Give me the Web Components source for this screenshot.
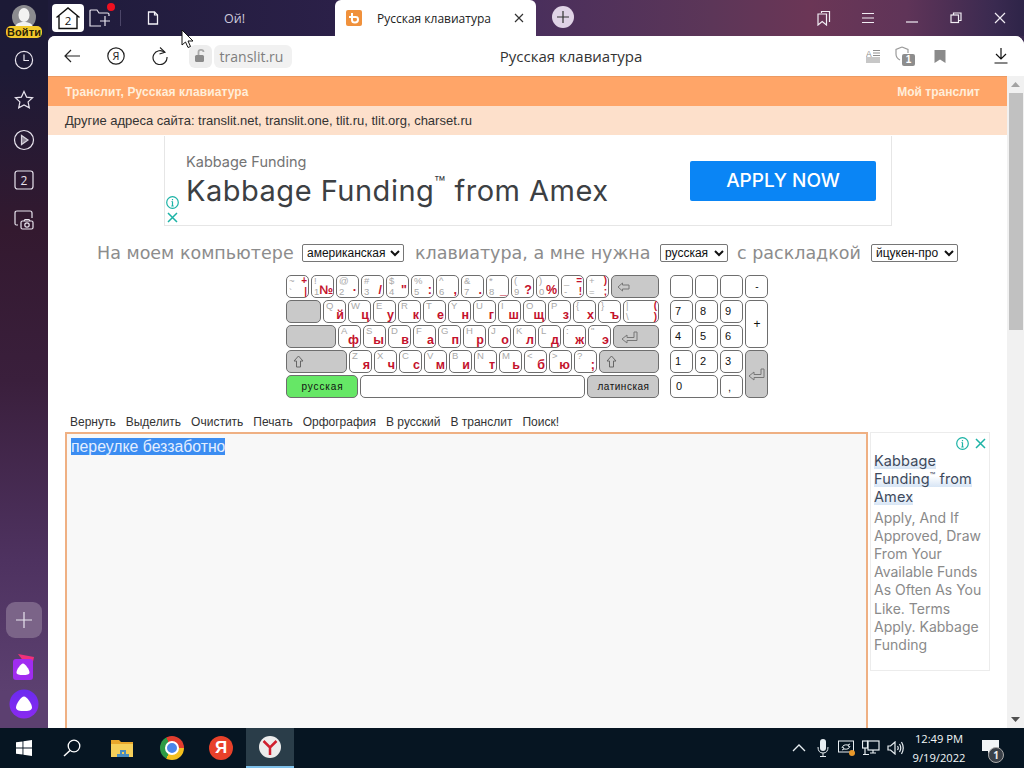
<!DOCTYPE html>
<html lang="ru">
<head>
<meta charset="utf-8">
<title>Русская клавиатура</title>
<style>
html,body{margin:0;padding:0;width:1024px;height:768px;overflow:hidden;background:#1b1a35}
</style>
</head>
<body>
<browser-app></browser-app>
<script>
function def(name, css, html){
  customElements.define(name, class extends HTMLElement{
    connectedCallback(){
      if(this.shadowRoot) return;
      const r=this.attachShadow({mode:'open'});
      const body = typeof html==='function'? html(this): html;
      r.innerHTML='<style>'+css+'</style>'+body;
    }
  });
}
const UI='"Open Sans","Noto Sans",sans-serif';
const AR='"Liberation Sans",Arial,sans-serif';
const AD='Inter,"Open Sans",sans-serif';
const S=(w,h,inner,extra='')=>`<svg width="${w}" height="${h}" viewBox="0 0 ${w} ${h}" fill="none" stroke="currentColor" stroke-width="1.2" ${extra}>${inner}</svg>`;

/* ---------- generic icon button ---------- */
def('icon-box',`:host{display:flex;align-items:center;justify-content:center;width:var(--w,44px);height:var(--h,40px);color:var(--c,#222);flex:none}`,`<slot></slot>`);

/* ---------- left rail ---------- */
def('left-rail',`
:host{display:flex;flex-direction:column;align-items:center;width:48px;flex:none;color:#e8e4ee;
 background:linear-gradient(180deg,#1c1a36 0,#1d1a36 70px,#33192f 230px,#3a1f3c 380px,#4e3260 560px,#5c4070 692px)}
.av{position:relative;height:40px;width:48px;flex:none}
.face{position:absolute;left:12px;top:5px;width:24px;height:24px;border-radius:50%;background:#8c8c90;overflow:hidden}
.pill{position:absolute;left:6px;top:26px;width:36px;height:12px;border-radius:5px;background:#f3c92c;color:#2a2208;font:bold 11px/12px ${AR};text-align:center;letter-spacing:.1px}
.top{display:flex;flex-direction:column}
.top icon-box{--w:48px;--h:40px;--c:#e8e4ee}
.grow{flex:1}
.plus{width:36px;height:36px;border-radius:9px;background:#7b6488;display:flex;align-items:center;justify-content:center;margin-bottom:10px;flex:none}
.al{height:38px;display:flex;align-items:center;justify-content:center;flex:none}
`,`
<div class="av"><div class="face"><svg width="24" height="24" viewBox="0 0 24 24"><ellipse cx="12" cy="10" rx="5.500" ry="7" fill="#f2f2f2"/><path d="M2 24c1-6 6-7 10-7s9 1 10 7z" fill="#f2f2f2"/></svg></div><div class="pill">Войти</div></div>
<div class="top">
<icon-box>${S(20,20,'<circle cx="10" cy="10" r="8.600"/><path d="M10 4.500V10.500H15"/>')}</icon-box>
<icon-box>${S(20,20,'<path d="M10 1.500l2.600 5.600 6 .7-4.500 4.100 1.200 6L10 15l-5.300 2.900 1.200-6L1.400 7.800l6-.7z"/>')}</icon-box>
<icon-box>${S(22,22,'<circle cx="11" cy="11" r="9.500"/><path d="M8.500 6.500v9l6.500-4.500z" fill="#8c8494" stroke="#d8d4de"/>')}</icon-box>
<icon-box>${S(20,20,'<rect x="1" y="1" width="18" height="18" rx="2.500"/><text x="10" y="14.500" text-anchor="middle" font-family="Open Sans" font-size="12" fill="currentColor" stroke="none">2</text>')}</icon-box>
<icon-box>${S(20,20,'<path d="M4 15H2.500Q1 15 1 13.500V3Q1 1 3 1H16Q18 1 18 3V8"/><rect x="7" y="11" width="12" height="8" rx="1.500"/><circle cx="13" cy="15" r="2.200"/><path d="M10 11l1-1.500h4l1 1.500"/>')}</icon-box>
</div>
<div class="grow"></div>
<div class="plus">${S(16,16,'<path d="M8 0V16M0 8H16"/>')}</div>
<div class="al" style="margin-left:-3px"><svg width="26" height="30" viewBox="0 0 26 30"><path d="M8 2l16 3-3 14z" fill="#f0317a"/><rect x="3" y="7" width="20" height="21" rx="3" fill="#a02cf0"/><path d="M13 11.500c2 0 6.500 6 6.500 9 0 2-3 2.500-6.500 2.500s-6.500-.5-6.500-2.500C6.500 17.500 11 11.500 13 11.500z" fill="#fff"/></svg></div>
<div class="al" style="height:36px;margin-bottom:6px"><svg width="30" height="30" viewBox="0 0 30 30"><defs><linearGradient id="ag" x1="0" y1="0" x2="0" y2="1"><stop offset="0" stop-color="#6a2bf0"/><stop offset="1" stop-color="#8a2af0"/></linearGradient></defs><circle cx="15" cy="15" r="14.500" fill="url(#ag)"/><path d="M15 7.500c3 0 8 7.500 8 11 0 3-4 3.500-8 3.500s-8-.5-8-3.500c0-3.500 5-11 8-11z" fill="#fff"/></svg></div>
`);

/* ---------- tab strip ---------- */
def('tab-strip',`
:host{display:flex;height:36px;flex:none;color:#fff;
 background:linear-gradient(90deg,#241c40 0,#2b2048 25%,#4a2f5c 50%,#5c3658 68%,#6b3656 78%,#5f3458 88%,#3a2a50 97%,#2e2448 100%)}
.left{display:flex;align-items:center;width:287px;flex:none;background:linear-gradient(90deg,#1e1b3a,#2b2048);border-bottom-right-radius:6px;position:relative}
.home{width:32px;height:28px;margin-left:4px;background:#fff;border-radius:4px;display:flex;align-items:center;justify-content:center;color:#111;flex:none}
.folder{width:26px;display:flex;justify-content:center;margin-left:3px;position:relative;color:#e8e4ee}
.dot{position:absolute;right:-2px;top:-5px;width:8px;height:8px;border-radius:50%;background:#f01020}
.sep{width:1px;height:16px;background:#4c4668;margin-left:7px}
.doc{margin-left:26px;color:#f4f2f8;display:flex}
.oy{margin-left:65px;font:12.500px ${UI};color:#cfcadb}
.active{width:201px;height:36px;flex:none;background:#fff;border-radius:6px 6px 0 0;display:flex;align-items:center;color:#222;position:relative}
.fav{margin-left:11px;width:16px;height:16px;border-radius:2px;background:#f0913c;display:flex;align-items:center;justify-content:center}
.name{margin-left:15px;font:12px ${UI};color:#222;white-space:nowrap;width:118px}
.x{margin-left:19px;display:flex;color:#333}
.new{margin-left:16px;margin-top:6px;width:22px;height:22px;border-radius:50%;background:#e0d3e6;display:flex;align-items:center;justify-content:center;color:#333;flex:none}
.grow{flex:1}
.r{display:flex;align-items:center;color:#f1edf4;margin-right:2px}
.r icon-box{--c:#f1edf4;--h:36px;--w:44px}
`,`
<div class="left">
 <div class="home">${S(26,24,'<path d="M1.500 11.500L13 2l11.500 9.500M4 10v12.500H22V10" stroke-width="1.400"/><text x="13" y="19" text-anchor="middle" font-family="Open Sans" font-size="11.500" fill="#111" stroke="none">2</text>')}</div>
 <div class="folder">${S(22,20,'<path d="M20 8V6.500Q20 5 18.500 5H10L8 2H2Q1 2 1 3V18H12"/><path d="M16 8V18M11 13H21"/>')}<span class="dot"></span></div>
 <div class="sep"></div>
 <div class="doc">${S(12,14,'<path d="M1.500 1H7.500L10.500 4V13H1.500z" stroke-width="1.300"/><path d="M7.500 1V4H10.500"/>')}</div>
 <div class="oy">Ой!</div>
</div>
<div class="active">
 <div class="fav"><svg width="12" height="12" viewBox="0 0 12 12" fill="none" stroke="#fff" stroke-width="2"><path d="M4 1V8Q4 10.500 7 10.500T10 7.500 7 5H1"/></svg></div>
 <div class="name"><slot></slot></div>
 <div class="x">${S(10,10,'<path d="M1 1L9 9M9 1L1 9"/>')}</div>
</div>
<div class="new">${S(12,12,'<path d="M6 0V12M0 6H12"/>')}</div>
<div class="grow"></div>
<div class="r">
 <icon-box>${S(14,16,'<path d="M4.500 3V1.500H12.500V12"/><path d="M1 4H9.500V15L5.200 11.500 1 15z"/>')}</icon-box>
 <icon-box>${S(14,12,'<path d="M1 1.500H13M1 6H13M1 10.500H13"/>')}</icon-box>
 <icon-box><span style="margin-top:8px;display:flex">${S(12,2,'<path d="M0 1H12"/>')}</span></icon-box>
 <icon-box>${S(12,12,'<path d="M3.500 3V1H11V8.500H8.500"/><rect x="1" y="3" width="7.500" height="7.500"/>')}</icon-box>
 <icon-box>${S(12,12,'<path d="M1 1L11 11M11 1L1 11"/>')}</icon-box>
</div>
`);

/* ---------- tool bar ---------- */
def('tool-bar',`
:host{display:flex;align-items:center;height:40px;flex:none;background:#fff;position:relative;color:#222}
.nav{display:flex;margin-left:2px}
.lock{width:23px;height:23px;border-radius:6px;background:#ededed;margin-left:7px;display:flex;align-items:center;justify-content:center;color:#888}
.addr{height:23px;margin-left:2px;width:78px;box-sizing:border-box;padding-right:3px;border-radius:6px;background:#f1f1f1;font:14px/23px ${UI};color:#7e7e7e;text-align:center;white-space:nowrap}
.title{flex:none;width:200px;margin-left:179px;text-align:center;font:15px ${UI};color:#333;white-space:nowrap}
.grow{flex:1}
.r{display:flex;align-items:center;margin-right:0;color:#9a9a9a}
.badge{position:absolute;left:7px;top:8px;width:13px;height:12px;background:#8d8d8d;border-radius:2px;color:#fff;font:bold 10px/12px ${AR};text-align:center}
.sh{position:relative;width:22px;height:20px}
`,`
<div class="nav">
 <icon-box>${S(16,14,'<path d="M7 1L1 7L7 13M1 7H16"/>')}</icon-box>
 <icon-box>${S(18,18,'<circle cx="9" cy="9" r="8.200"/><text x="9" y="13" text-anchor="middle" font-family="Open Sans" font-size="11" fill="#222" stroke="none">Я</text>')}</icon-box>
 <icon-box>${S(16,18,'<path d="M12.800 5.500A7 7 0 1 0 15 10"/><path d="M8 .5l5 4.700-5.500 1.800" stroke-width="1.100"/>')}</icon-box>
</div>
<div class="lock">${S(16,16,'<path d="M5.500 7V4Q5.500 1.800 8 1.800T10.500 4" stroke-width="1.800" stroke="#a8a8a8"/><rect x="2" y="7" width="9" height="7" rx="1.500" fill="#8a8a8a" stroke="none"/>')}</div>
<div class="addr">translit.ru</div>
<div class="title"><slot></slot></div>
<div class="grow"></div>
<div class="r">
 <icon-box style="--w:22px;--c:#8f8f8f">${S(14,14,'<text x="0" y="7.500" font-family="Liberation Sans" font-size="8.500" fill="#8f8f8f" stroke="none">A</text><path d="M7 1.500H14M7 4H14M7 6.500H14M0 9H14M0 11H14M0 13H14" stroke-width="1"/>')}</icon-box>
 <span style="width:11px"></span>
 <div class="sh">${S(14,16,'<path d="M7 1L1 3.500V8Q1 12 5 14M7 1l6 2.500V7" stroke="#9a9a9a"/>')}<span class="badge">1</span></div>
 <span style="width:16px"></span>
 <icon-box style="--w:14px">${S(12,13,'<path d="M.5 0H11.500V13L6 9.500.5 13z" fill="#8a8a8a" stroke="none"/>')}</icon-box>
 <span style="width:47px"></span>
 <icon-box style="--c:#111;--w:14px">${S(14,16,'<path d="M7 0V11M2 6L7 11 12 6M.5 15H13.500"/>')}</icon-box>
 <span style="width:16px"></span>
</div>
`);

/* ---------- page top bars ---------- */
def('site-head',`
:host{display:block;font:12px ${AR}}
.o{height:29px;background:#ffa568;border-top:1px solid #ec9a62;display:flex;justify-content:space-between;align-items:center;padding:0 27px 0 17px;color:#ffeeda;font-weight:bold}
.o span:first-child{letter-spacing:.1px}
.p{height:29px;background:#fde0cb;font-size:13px;line-height:29px;padding-left:17px;color:#333}
`,`<div class="o"><span>Транслит, Русская клавиатура</span><span>Мой транслит</span></div><div class="p">Другие адреса сайта: translit.net, translit.one, tlit.ru, tlit.org, charset.ru</div>`);

def('ad-marks',`
:host{display:flex;flex-direction:var(--dir,column);gap:var(--g,3px);align-items:center;color:#1cb3a6}
`,`${S(13,13,'<circle cx="6.500" cy="6.500" r="5.800"/><path d="M6.500 5.500V10M6.500 3V4.200M5.500 5.500H6.500M5.300 10H7.700"/>')}${S(11,11,'<path d="M1 1L10 10M10 1L1 10" stroke-width="1.500"/>')}`);

def('ad-banner',`
:host{display:flex;width:726px;height:89px;margin-left:116px;margin-top:1px;border:1px solid #e6e6e6;border-top:0;background:#fff;box-sizing:content-box;align-items:stretch}
.m{width:15px;flex:none;display:flex;align-items:flex-end;padding-bottom:2px;margin-left:1px}
.t{margin-left:5px;width:504px;flex:none;font-family:${AD};display:flex;flex-direction:column}
.a{font-size:14.500px;color:#747474;margin-top:17px;line-height:18px;white-space:nowrap}
.b{font-size:29px;color:#3c4043;line-height:34px;margin-top:3px;white-space:nowrap;font-weight:400;letter-spacing:.5px}
sup{font-size:.62em;line-height:0;vertical-align:.6em}
.btn{width:186px;height:40px;margin-top:25px;background:#0a85f5;border-radius:2px;color:#fff;font:500 19px/40px ${AD};text-align:center;flex:none}
`,`<div class="m"><ad-marks></ad-marks></div><div class="t"><div class="a">Kabbage Funding</div><div class="b">Kabbage Funding<sup>™</sup> from Amex</div></div><div class="btn">APPLY NOW</div>`);

def('layout-row',`
:host{display:flex;align-items:center;height:18px;margin:18px 0 0 49px;font:17.500px "DejaVu Sans",Verdana,sans-serif;color:#8c8c8c;white-space:nowrap}
select{font:12px ${AR};height:18px;box-sizing:border-box;padding:0;background:#fff;color:#111;border:1px solid #767676;border-radius:2px;flex:none}
.a{width:197px}.b{width:237px}.c{width:124px}
`,`<span class="a">На моем компьютере</span><select style="margin-left:8px;width:102px"><option>американская</option></select><span class="b" style="margin-left:11px">клавиатура, а мне нужна</span><select style="margin-left:8px;width:68px"><option>русская</option></select><span class="c" style="margin-left:9px">с раскладкой</span><select style="margin-left:10px;width:87px"><option>йцукен-про</option></select>`);

/* ---------- keyboard ---------- */
const icons={
 back:`<svg width="14" height="10" viewBox="0 0 14 10" fill="none" stroke="#777"><path d="M1 5L5.500 1V3H12V7H5.500V9z"/></svg>`,
 enter:`<svg width="18" height="14" viewBox="0 0 18 14" fill="none" stroke="#777"><path d="M1 9L6 5V7.500H13V2H16V10.500H6V13z"/></svg>`,
 shift:`<svg width="11" height="13" viewBox="0 0 11 13" fill="none" stroke="#666"><path d="M5.500 1L1 6H3.500V12H7.500V6H10z"/></svg>`
};
def('kb-key',`
:host{display:grid;grid-template-columns:1fr auto;grid-template-rows:10.500px 10.500px;box-sizing:border-box;width:var(--w,23px);height:var(--h,23px);border:1px solid #6e6e6e;border-radius:5px;background:var(--bg,#fff);padding:0 1px 0 2px;grid-column:var(--gc,auto);grid-row:var(--gr,auto)}
span{display:block;white-space:nowrap}
.tl,.bl{font:9.500px/11px ${AR};color:#a9a9a9}
.tl{align-self:start;margin-top:-1px}
.bl{align-self:end}
.tr,.br{color:#c4122c;text-align:right;font-weight:bold;font-family:${AR}}
.tr{font-size:10px;line-height:11px;align-self:start;margin-top:-1px}
.br{font-size:12.500px;line-height:13px;align-self:end}
.br.p{font-size:10px;line-height:11px}
.c{grid-column:1/3;grid-row:1/3;display:flex;align-items:center;justify-content:var(--jc,center);font:var(--fs,10px) ${AR};color:#111;padding-left:var(--pl,0);height:var(--h2,21px)}
`,el=>{
 const g=a=>el.getAttribute(a)||'';
 if(el.hasAttribute('icon')) return `<div class="c">${icons[g('icon')]}</div>`;
 if(el.hasAttribute('label')) return `<div class="c" style="${g('ls')?'letter-spacing:'+g('ls'):''}">${g('label')}</div>`;
 return `<span class="tl">${g('tl')}</span><span class="tr">${g('tr')}</span><span class="bl">${g('bl')}</span><span class="br ${g('tr')?'p':''}">${g('br')}</span>`;
});
def('kb-row',`:host{display:flex;gap:2px;flex:none}`,`<slot></slot>`);
def('kb-main',`:host{display:flex;flex-direction:column;gap:2px;width:373px;flex:none}`,`<slot></slot>`);
def('kb-pad',`:host{display:grid;grid-template-columns:repeat(4,23px);grid-auto-rows:23px;gap:2px;flex:none;margin-left:11px}`,`<slot></slot>`);
def('kb-all',`:host{display:flex;margin:13px 0 0 238px}`,`<slot></slot>`);

const K=(tl,bl,tr,br)=>`<kb-key tl="${tl}" bl="${bl}" tr="${tr}" br="${br}"></kb-key>`;
const G='--bg:#c9c9c9';
function keyboardHTML(){
 const r1=[['~','`','+','|'],['!','1','','№'],['@','2','','·'],['#','3','','/'],['$','4','','&quot;'],['%','5','',':'],['^','6','',','],['&amp;','7','','.'],['*','8','','_'],['(','9','','?'],[')','0','','%'],['_','-','=','!'],['+','=',')',';']];
 const r2=[['Q','й'],['W','ц'],['E','у'],['R','к'],['T','е'],['Y','н'],['U','г'],['I','ш'],['O','щ'],['P','з'],['{','х'],['}','ъ']];
 const r3=[['A','ф'],['S','ы'],['D','в'],['F','а'],['G','п'],['H','р'],['J','о'],['K','л'],['L','д'],[':','ж'],['&quot;','э']];
 const r4=[['Z','я'],['X','ч'],['C','с'],['V','м'],['B','и'],['N','т'],['M','ь'],['&lt;','б'],['&gt;','ю'],['?',';']];
 const np=(l,st='')=>`<kb-key label="${l}" style="--jc:flex-start;--pl:2px;--fs:11px;--h2:19px;${st}"></kb-key>`;
 const nc=(l,st='')=>`<kb-key label="${l}" style="${st}"></kb-key>`;
 const L='--jc:flex-start;--pl:';
 return `<kb-all><kb-main>
 <kb-row>${r1.map(k=>K(...k)).join('')}<kb-key icon="back" style="--w:48px;${G};${L}3px"></kb-key></kb-row>
 <kb-row><kb-key label="" style="--w:35px;${G}"></kb-key>${r2.map(k=>K(k[0],'','',k[1])).join('')}<kb-key tl="|" bl="\\" tr="(" br=")" style="--w:36px"></kb-key></kb-row>
 <kb-row><kb-key label="" style="--w:50px;${G}"></kb-key>${r3.map(k=>K(k[0],'','',k[1])).join('')}<kb-key icon="enter" style="--w:46px;${G};${L}5px"></kb-key></kb-row>
 <kb-row><kb-key icon="shift" style="--w:61px;${G};${L}4px"></kb-key>${r4.map(k=>K(k[0],'','',k[1])).join('')}<kb-key icon="shift" style="--w:60px;${G};${L}4px"></kb-key></kb-row>
 <kb-row><kb-key label="русская" ls=".9px" style="--w:72px;--bg:#66e766"></kb-key><kb-key label="" style="--w:225px"></kb-key><kb-key label="латинская" ls=".5px" style="--w:72px;${G}"></kb-key></kb-row>
 </kb-main><kb-pad>
 ${nc('')}${nc('')}${nc('')}${nc('-','font-weight:bold')}
 ${np('7')}${np('8')}${np('9')}<kb-key label="+" style="--h:48px;--gc:4;--gr:2/4;--h2:46px;--fs:12px"></kb-key>
 ${np('4')}${np('5')}${np('6')}
 ${np('1')}${np('2')}${np('3')}<kb-key icon="enter" style="--h:48px;--gc:4;--gr:4/6;--h2:46px;${G}"></kb-key>
 <kb-key label="0" style="--w:48px;--gc:1/3;--jc:flex-start;--pl:3px;--fs:11px;--h2:19px"></kb-key>${np(',','--pl:5px;--h2:21px')}
 </kb-pad></kb-all>`;
}
def('keyboard-panel',`:host{display:block}`,()=>keyboardHTML());

/* ---------- toolbar links ---------- */
def('edit-menu',`:host{display:flex;gap:10px;margin:17px 0 0 22px;font:12px/14px ${AR};color:#333;white-space:nowrap;height:14px}`,`<span>Вернуть</span><span>Выделить</span><span>Очистить</span><span>Печать</span><span>Орфография</span><span>В русский</span><span>В транслит</span><span>Поиск!</span>`);

/* ---------- editor ---------- */
def('text-editor',`
:host{display:block;box-sizing:border-box;width:803px;height:320px;border:2px solid #efb083;border-bottom:0;background:#f8f8f8;padding:4px 4px;font:15.800px/18px ${AR};flex:none;margin-left:17px;color:#fff}
mark{background:#3b8df2;color:#e3eeff}
`,`<mark><slot></slot></mark>`);

def('side-ad',`
:host{display:block;box-sizing:border-box;width:120px;height:239px;margin-left:2px;border:1px solid #ececec;background:#fff;padding:0 3px;font-family:${AD};flex:none}
.m{display:flex;justify-content:flex-end;height:18px;padding-top:1px}
ad-marks{--dir:row;--g:6px}
.h{font-size:14.500px;line-height:18.200px;color:#3e4a5c;letter-spacing:.1px}
.h span{background:linear-gradient(180deg,transparent 35%,#d7e5f5 100%)}
.b{font-size:14px;line-height:18.200px;color:#8a8a8a;margin-top:2px}
sup{font-size:.62em;line-height:0;vertical-align:.6em}
`,`<div class="m"><ad-marks></ad-marks></div><div class="h"><span>Kabbage</span><br><span>Funding<sup>™</sup> from</span><br><span>Amex</span></div><div class="b">Apply, And If Approved, Draw From Your Available Funds As Often As You Like. Terms Apply. Kabbage Funding</div>`);

def('work-area',`:host{display:flex;margin-top:3px;align-items:flex-start}`,`<slot></slot>`);

def('scroll-bar',`
:host{display:flex;flex-direction:column;align-items:center;width:17px;flex:none;background:#f1f1f1}
.ar{height:17px;display:flex;align-items:center;justify-content:center;flex:none}
.th{width:14px;height:237px;background:#c1c1c1;flex:none}
.g{flex:1}
`,`<div class="ar"><svg width="9" height="5"><path d="M0 5L4.500 0 9 5z" fill="#a3a3a3"/></svg></div><div class="th"></div><div class="g"></div><div class="ar"><svg width="9" height="5"><path d="M0 0L4.500 5 9 0z" fill="#505050"/></svg></div>`);

def('site-page',`
:host{display:flex;flex:1;min-height:0;background:#fff;overflow:hidden}
.c{flex:1;min-width:0;overflow:hidden;display:block}
`,`<div class="c"><site-head></site-head><ad-banner></ad-banner><layout-row></layout-row><keyboard-panel></keyboard-panel><edit-menu></edit-menu><work-area><text-editor>переулке беззаботно</text-editor><side-ad></side-ad></work-area></div><scroll-bar></scroll-bar>`);

/* ---------- taskbar ---------- */
def('task-bar',`
:host{display:flex;align-items:center;height:40px;flex:none;background:#061522;color:#fff;position:relative}
.i{width:48px;height:40px;display:flex;align-items:center;justify-content:center;flex:none;box-sizing:border-box}
.act{background:#2a3d49;border-bottom:2px solid #7ec0ea}
.grow{flex:1}
.ya{width:24px;height:24px;border-radius:50%;background:#e8412a;color:#fff;font:bold 17px/24px ${AR};text-align:center}
.ch{width:24px;height:24px;border-radius:50%;background:conic-gradient(from -30deg,#e23d2e 0 120deg,#f4c01e 120deg 240deg,#2d9a45 240deg 360deg);display:flex;align-items:center;justify-content:center}
.ch i{display:block;width:10px;height:10px;border-radius:50%;background:#4a86e8;border:2px solid #fff}
.yb{width:22px;height:22px;border-radius:50%;background:#ececec;display:flex;align-items:center;justify-content:center}
.t{display:flex;align-items:center;justify-content:center;width:24px;height:40px;flex:none;color:#e8eef2}
.clock{width:72px;text-align:center;font:11.200px/19px ${UI};color:#f2f5f7;flex:none;white-space:nowrap;margin-left:-4px}
.notif{position:relative;width:36px;display:flex;justify-content:center;margin-left:-2px;margin-right:15px}
.nb{position:absolute;left:15px;top:7px;width:16px;height:16px;border-radius:50%;background:#3a4048;border:1px solid #aaa;box-sizing:border-box;font:bold 10px/14px ${UI};text-align:center;color:#eee}
`,`
<div class="i" style="margin-right:0">${`<svg width="16" height="16" viewBox="0 0 16 16" fill="#fff"><path d="M0 2.300L6.500 1.400V7.500H0zM7.400 1.300L16 0V7.500H7.400zM0 8.500H6.500V14.600L0 13.700zM7.400 8.500H16V16L7.400 14.700z"/></svg>`}</div>
<div class="i">${S(18,18,'<circle cx="11" cy="7" r="5.800" stroke-width="1.300"/><path d="M7 11.500L1 17" stroke-width="1.500"/>')}</div>
<div class="i" style="margin-left:2px"><svg width="22" height="18" viewBox="0 0 22 18"><path d="M0 1H8L10 3H22V7H0z" fill="#e9a72c"/><rect x="0" y="5" width="22" height="13" fill="#f6cf5a"/><path d="M9 11H15V15H13V13H11V15H9z" fill="#4a8cbf"/><rect x="6" y="15" width="12" height="3" fill="#4a8cbf"/></svg></div>
<div class="i" style="margin-left:2px"><div class="ch"><i></i></div></div>
<div class="i" style="margin-left:1px"><div class="ya">Я</div></div>
<div class="i act" style="margin-left:1px"><div class="yb"><svg width="16" height="16" viewBox="0 0 16 16" fill="none" stroke="#d01f2e" stroke-width="2.500"><path d="M1.500 2L8 8.500 14.500 2M8 8V16"/></svg></div></div>
<div class="grow"></div>
<div class="t">${S(14,8,'<path d="M1 7L7 1 13 7" stroke-width="1.300"/>')}</div>
<div class="t">${`<svg width="12" height="18" viewBox="0 0 12 18" fill="none" stroke="#e8eef2"><rect x="3" y="0" width="6" height="12" rx="3" fill="#e8eef2" stroke="none"/><path d="M1 8Q1 14 6 14T11 8M6 14V17M3 17.500H9"/></svg>`}</div>
<div class="t" style="position:relative">${`<svg width="18" height="16" viewBox="0 0 18 16" fill="none" stroke="#e8eef2"><rect x=".5" y="1" width="15" height="11"/><path d="M4 8Q5 4 10 5M12 4L10 5 11 7M12 6Q11 10 6 9M4 10L6 9 5 7"/><circle cx="14" cy="13" r="3" fill="#e8982a" stroke="none"/></svg>`}</div>
<div class="t">${S(18,16,'<rect x="6" y="1" width="11" height="9"/><rect x=".5" y="1" width="5" height="7"/><path d="M3 8V14.500M1 14.500H7M11 10V13M8 13H14"/>')}</div>
<div class="t">${S(17,14,'<path d="M1 5V9H3.500L8 13V1L3.500 5z"/><path d="M10.500 5Q12 7 10.500 9M12.500 3Q15 7 12.500 11M14.500 1Q18 7 14.500 13"/>')}</div>
<div class="clock">12:49 PM<br>9/19/2022</div>
<div class="notif">${`<svg width="18" height="16" viewBox="0 0 18 16"><path d="M0 0H17V11H9L6 14V11H0z" fill="#f2f5f7"/></svg>`}<span class="nb">1</span></div>
`);

def('mouse-cursor',`:host{position:absolute;left:181px;top:29px;width:14px;height:20px;display:block}`,`<svg width="14" height="20" viewBox="0 0 14 20"><path d="M1 1V16L4.500 13 7 18.500 9.500 17.500 7 12H12z" fill="#fff" stroke="#111" stroke-width="1"/></svg>`);

/* ---------- root ---------- */
def('browser-app',`
:host{display:flex;flex-direction:column;width:1024px;height:768px;position:relative;overflow:hidden}
.u{display:flex;flex:1;min-height:0}
.main{flex:1;min-width:0;display:flex;flex-direction:column;background:linear-gradient(90deg,#241c40,#6b3656 76%,#3a2a50)}
.body{flex:1;min-height:0;display:flex;flex-direction:column;background:#fff;border-radius:7px 9px 0 0;overflow:hidden}
`,`<div class="u"><left-rail></left-rail><div class="main"><tab-strip>Русская клавиатура</tab-strip><div class="body"><tool-bar>Русская клавиатура</tool-bar><site-page></site-page></div></div></div><task-bar></task-bar><mouse-cursor></mouse-cursor>`);
</script>
</body>
</html>
